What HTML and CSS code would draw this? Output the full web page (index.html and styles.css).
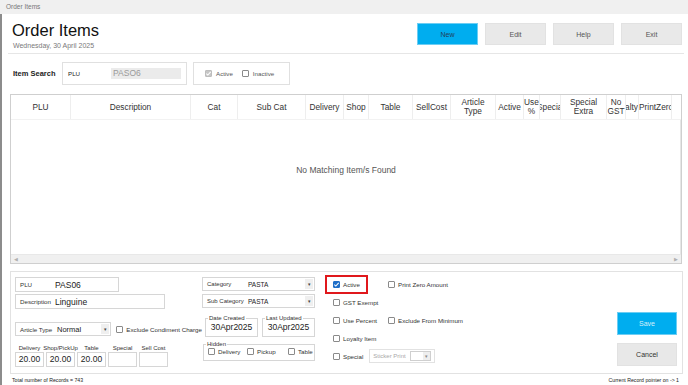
FILE: index.html
```html
<!DOCTYPE html>
<html>
<head>
<meta charset="utf-8">
<link rel="stylesheet" href="styles.css">
</head>
<body>
<div class="titlebar">Order Items</div>
<div class="window">
  <div class="top">
    <div class="title-block">
      <h1>Order Items</h1>
      <div class="date">Wednesday, 30 April 2025</div>
    </div>
    <div class="actions">
      <button class="btn primary">New</button>
      <button class="btn">Edit</button>
      <button class="btn">Help</button>
      <button class="btn">Exit</button>
    </div>
  </div>

  <div class="search">
    <span class="search-label">Item Search</span>
    <div class="box plu-box"><span class="s-lbl">PLU</span><span class="s-input">PASO6</span></div>
    <div class="box status-box">
      <span class="cb disabled checked"><svg viewBox="0 0 8 8"><path d="M1.5 4.2 L3.2 5.8 L6.5 2.2" fill="none" stroke="#fff" stroke-width="1.2"/></svg></span><span class="s-opt">Active</span>
      <span class="cb"></span><span class="s-opt">Inactive</span>
    </div>
  </div>

  <div class="grid">
    <div class="grid-head">
      <div class="gh c-plu">PLU</div>
      <div class="gh c-desc">Description</div>
      <div class="gh c-cat">Cat</div>
      <div class="gh c-sub">Sub Cat</div>
      <div class="gh c-del">Delivery</div>
      <div class="gh c-shop">Shop</div>
      <div class="gh c-table">Table</div>
      <div class="gh c-sell">SellCost</div>
      <div class="gh c-art">Article<br>Type</div>
      <div class="gh c-act">Active</div>
      <div class="gh c-use">Use<br>%</div>
      <div class="gh c-spec"><span class="clip">Special</span></div>
      <div class="gh c-spex">Special<br>Extra</div>
      <div class="gh c-gst">No<br>GST</div>
      <div class="gh c-loy"><span class="clip">Loyalty</span></div>
      <div class="gh c-pz"><span class="clip">PrintZero</span></div>
      <div class="gh c-fill"></div>
    </div>
    <div class="grid-body">
      <span class="empty">No Matching Item/s Found</span>
      <span class="vline"></span>
    </div>
    <div class="hscroll">
      <span class="arr">&#9664;</span>
      <span class="arr">&#9654;</span>
    </div>
  </div>

  <div class="panel">
    <div class="col1">
      <div class="field f-plu"><span class="f-lbl">PLU</span><span class="f-val">PAS06</span></div>
      <div class="field f-desc"><span class="f-lbl">Description</span><span class="f-val">Linguine</span></div>
      <div class="art-row">
        <div class="field f-art">
          <span class="f-lbl">Article Type</span><span class="f-val small">Normal</span>
          <span class="dd">&#9662;</span>
        </div>
        <span class="cb"></span><span class="opt">Exclude Condiment Charge</span>
      </div>
      <div class="prices">
        <div class="price"><span class="p-lbl">Delivery</span><div class="p-box">20.00</div></div>
        <div class="price"><span class="p-lbl">Shop/PickUp</span><div class="p-box">20.00</div></div>
        <div class="price"><span class="p-lbl">Table</span><div class="p-box">20.00</div></div>
        <div class="price"><span class="p-lbl">Special</span><div class="p-box"></div></div>
        <div class="price"><span class="p-lbl">Sell Cost</span><div class="p-box"></div></div>
      </div>
    </div>

    <div class="col2">
      <div class="sel"><span class="f-lbl c2">Category</span><span class="sel-val">PASTA</span><span class="dd">&#9662;</span></div>
      <div class="sel sub"><span class="f-lbl c2">Sub Category</span><span class="sel-val">PASTA</span><span class="dd">&#9662;</span></div>
      <div class="dates">
        <fieldset class="fs"><legend>Date Created</legend><div class="d-val">30Apr2025</div></fieldset>
        <fieldset class="fs"><legend>Last Updated</legend><div class="d-val">30Apr2025</div></fieldset>
      </div>
      <fieldset class="fs hidden-fs">
        <legend>Hidden</legend>
        <div class="hid-row">
          <span class="cb"></span><span class="opt">Delivery</span>
          <span class="cb"></span><span class="opt">Pickup</span>
          <span class="cb"></span><span class="opt">Table</span>
        </div>
      </fieldset>
    </div>

    <div class="col3">
      <div class="c3-cell"><span class="redbox"><span class="cb checked"><svg viewBox="0 0 8 8"><path d="M1.5 4.2 L3.2 5.8 L6.5 2.2" fill="none" stroke="#fff" stroke-width="1.2"/></svg></span><span class="opt">Active</span></span></div>
      <div class="c3-cell"><span class="cb"></span><span class="opt">Print Zero Amount</span></div>
      <div class="c3-cell"><span class="cb"></span><span class="opt">GST Exempt</span></div>
      <div class="c3-cell"></div>
      <div class="c3-cell"><span class="cb"></span><span class="opt">Use Percent</span></div>
      <div class="c3-cell"><span class="cb"></span><span class="opt">Exclude From Minimum</span></div>
      <div class="c3-cell"><span class="cb"></span><span class="opt">Loyalty Item</span></div>
      <div class="c3-cell"></div>
      <div class="c3-cell span2">
        <span class="cb"></span><span class="opt">Special</span>
        <div class="sticker"><span class="st-lbl">Sticker Print</span><span class="st-dd"><span class="st-in"></span><span class="st-arr">&#9662;</span></span></div>
      </div>
    </div>

    <div class="col4">
      <button class="btn2 save">Save</button>
      <button class="btn2 cancel">Cancel</button>
    </div>
  </div>

  <div class="footer">
    <span>Total number of Records = 743</span>
    <span>Current Record pointer on -&gt; 1</span>
  </div>
</div>
</body>
</html>
```

FILE: styles.css
```css
* { box-sizing: border-box; }

body {
  margin: 0;
  width: 688px;
  height: 385px;
  overflow: hidden;
  font-family: "Liberation Sans", Arial, sans-serif;
  color: #333;
  background: #fff;
}

.titlebar {
  height: 14px;
  background: #f0f0f0;
  font-size: 6.5px;
  color: #777;
  line-height: 14px;
  padding-left: 6px;
}

.window {
  height: 371px;
  border-left: 2px solid #8c8c8c;
  display: flex;
  flex-direction: column;
}

/* header */
.top {
  height: 40px;
  flex: none;
  display: flex;
  justify-content: space-between;
  margin: 0 4px 0 6px;
  border-bottom: 1px solid #e6e6e6;
}
.title-block { padding: 6px 0 0 4px; }
h1 {
  margin: 0;
  font-size: 16.5px;
  font-weight: normal;
  line-height: 20px;
  color: #111;
}
.date {
  font-size: 7px;
  color: #7a7a7a;
  line-height: 9px;
  margin-top: 1px;
  padding-left: 1px;
}
.actions {
  display: flex;
  gap: 7px;
  padding: 9px 2px 0 0;
}
.btn {
  width: 61px;
  height: 22px;
  border: 1px solid #e2e2e2;
  background: #e9e9e9;
  font-family: inherit;
  font-size: 7px;
  color: #555;
  padding: 0;
}
.btn.primary {
  background: #00adef;
  border-color: #6ccdf3;
  color: #23405a;
}

/* search */
.search {
  height: 40px;
  flex: none;
  display: flex;
  align-items: flex-start;
  padding: 8px 0 0 11px;
}
.search-label {
  font-weight: bold;
  font-size: 7.5px;
  width: 49px;
  line-height: 23px;
  color: #222;
}
.box {
  border: 1px solid #e0e0e0;
  height: 23px;
  display: flex;
  align-items: center;
}
.plu-box { width: 125px; padding-left: 5px; }
.s-lbl { font-size: 6.2px; width: 43px; color: #222; }
.s-input {
  width: 70px;
  height: 11px;
  background: #ebebeb;
  color: #9a9a9a;
  font-size: 8.5px;
  line-height: 11px;
  padding-left: 2px;
}
.status-box { margin-left: 6px; width: 97px; padding-left: 11px; }
.s-opt { font-size: 6.2px; color: #555; margin: 0 9px 0 4px; }

/* checkboxes */
.cb {
  flex: none;
  display: inline-block;
  width: 7px;
  height: 7px;
  border: 1px solid #8a8a8a;
  border-radius: 1px;
  background: #fff;
  position: relative;
}
.cb svg { position: absolute; left: -1px; top: -1px; width: 7px; height: 7px; }
.cb.checked { background: #1f6fc8; border-color: #1f6fc8; }
.cb.disabled { background: #c6c6c6; border-color: #bdbdbd; }
.opt { font-size: 6.2px; color: #333; margin-left: 3px; white-space: nowrap; }

/* grid */
.grid {
  flex: none;
  margin-left: 8px;
  width: 672px;
  height: 170px;
  border: 1px solid #cfcfcf;
  display: flex;
  flex-direction: column;
}
.grid-head {
  height: 25px;
  flex: none;
  display: flex;
  border-bottom: 1px solid #f2f2f2;
}
.gh {
  flex: none;
  display: flex;
  align-items: center;
  justify-content: center;
  text-align: center;
  font-size: 8.3px;
  line-height: 9px;
  color: #333;
  white-space: nowrap;
  overflow: hidden;
  border-right: 1px solid #eeeeee;
}
.clip { display: block; overflow: hidden; white-space: nowrap; }
.c-plu { width: 60px; }
.c-desc { width: 120px; }
.c-cat { width: 47px; }
.c-sub { width: 68px; }
.c-del { width: 38px; }
.c-shop { width: 25px; }
.c-table { width: 44px; }
.c-sell { width: 38px; }
.c-art { width: 45px; }
.c-act { width: 28px; }
.c-use { width: 16px; }
.c-spec { width: 21px; }
.c-spec .clip { width: 20px; text-indent: -3px; }
.c-spex { width: 46px; }
.c-gst { width: 19px; }
.c-loy { width: 13px; }
.c-loy .clip { width: 12px; direction: rtl; }
.c-pz { width: 33px; justify-content: flex-start; }
.c-pz .clip { width: 32px; }
.c-fill { flex: 1; border-right: none; }

.grid-body {
  flex: 1;
  position: relative;
  display: flex;
  justify-content: center;
  padding-top: 45px;
}
.empty { font-size: 8.5px; color: #555; line-height: 10px; }
.vline {
  position: absolute;
  right: 0;
  top: 0;
  bottom: 0;
  width: 1px;
  background: #e6e6e6;
}
.hscroll {
  height: 9px;
  flex: none;
  background: #f0f0f0;
  border-top: 1px solid #e8e8e8;
  display: flex;
  justify-content: space-between;
  align-items: center;
  padding: 0 3px;
}
.arr { font-size: 5px; color: #b0b0b0; line-height: 8px; }

/* detail panel */
.panel {
  flex: none;
  margin: 7px 0 0 8px;
  width: 673px;
  height: 103px;
  border: 1px solid #e2e2e2;
  display: flex;
  padding: 5px 5px 0 4px;
}
.col1 { width: 187px; flex: none; }
.field {
  border: 1px solid #d6d6d6;
  height: 15px;
  display: flex;
  align-items: center;
  position: relative;
}
.f-plu { width: 104px; }
.f-desc { width: 150px; margin-top: 2px; }
.f-lbl {
  font-size: 6.2px;
  width: 39px;
  padding-left: 4px;
  color: #333;
  white-space: nowrap;
  flex: none;
}
.f-val { font-size: 8.5px; color: #222; }
.f-val.small { font-size: 7.5px; }
.art-row {
  margin-top: 13px;
  display: flex;
  align-items: center;
  height: 14px;
}
.f-art { width: 98px; height: 14px; margin-right: 5px; }
.f-art .f-lbl { width: 41px; }
.dd {
  position: absolute;
  right: 1px;
  top: 1px;
  bottom: 1px;
  width: 8px;
  background: #efefef;
  font-size: 5px;
  color: #444;
  display: flex;
  align-items: center;
  justify-content: center;
}
.prices { display: flex; gap: 2px; margin-top: 8px; }
.price { width: 29px; display: flex; flex-direction: column; align-items: center; }
.p-lbl { font-size: 6px; line-height: 8px; white-space: nowrap; color: #333; }
.p-box {
  width: 29px;
  height: 15px;
  border: 1px solid #d6d6d6;
  font-size: 8.5px;
  line-height: 13px;
  text-align: center;
  color: #222;
}

.col2 { width: 113px; flex: none; }
.sel {
  border: 1px solid #d6d6d6;
  height: 14px;
  display: flex;
  align-items: center;
  position: relative;
}
.sel.sub { margin-top: 3px; }
.f-lbl.c2 { width: 45px; padding-left: 4px; font-size: 6px; }
.sel-val { font-size: 6.5px; color: #222; }
.dates { display: flex; gap: 4px; margin: 7px 0 0 3px; }
.fs {
  margin: 0;
  padding: 0;
  border: 1px solid #d6d6d6;
  min-width: 0;
}
.fs legend {
  font-size: 6px;
  line-height: 6px;
  padding: 0 1px;
  margin-left: 2px;
  color: #333;
}
.dates .fs { width: 53px; height: 22px; }
.d-val { font-size: 8.5px; text-align: center; line-height: 13px; color: #222; }
.hidden-fs { width: 112px; height: 20px; margin: 4px 0 0 1px; }
.hid-row { display: flex; align-items: center; padding: 1px 0 0 4px; }
.hid-row .opt { margin-right: 0; }
.hid-row .opt:nth-of-type(2) { width: 29px; }
.hid-row .opt:nth-of-type(4) { width: 31px; }

.col3 {
  margin: -2px 0 0 10px;
  width: 125px;
  flex: none;
  display: grid;
  grid-template-columns: 63px 1fr;
  grid-auto-rows: 18px;
}
.c3-cell { display: flex; align-items: center; padding-left: 8px; }
.c3-cell:nth-child(even) { padding-left: 0; }
.c3-cell:first-child { padding-left: 0; }
.c3-cell.span2 { grid-column: 1 / span 2; }
.redbox {
  display: flex;
  align-items: center;
  width: 43px;
  height: 19px;
  border: 2px solid #e0181c;
  padding-left: 6px;
}
.sticker {
  margin-left: 6px;
  width: 66px;
  height: 14px;
  border: 1px solid #e2e2e2;
  display: flex;
  align-items: center;
  padding-left: 3px;
}
.st-lbl { font-size: 6px; color: #a8a8a8; width: 37px; }
.st-dd {
  display: flex;
  width: 21px;
  height: 10px;
  border: 1px solid #cfcfcf;
}
.st-in { flex: 1; background: #fff; }
.st-arr {
  width: 7px;
  background: #eee;
  font-size: 4.5px;
  color: #888;
  display: flex;
  align-items: center;
  justify-content: center;
}

.col4 {
  margin-left: auto;
  width: 60px;
  display: flex;
  flex-direction: column;
  padding-top: 35px;
}
.btn2 {
  width: 60px;
  height: 23px;
  padding: 0;
  font-family: inherit;
  font-size: 7px;
}
.save { background: #00adef; border: 1px solid #6ccdf3; color: #d6f0fb; }
.cancel { margin-top: 8px; background: #e8e8e8; border: 1px solid #e2e2e2; color: #333; }

.footer {
  flex: none;
  height: 11px;
  display: flex;
  justify-content: space-between;
  align-items: center;
  padding: 1px 9px 0 10px;
  font-size: 5.2px;
  color: #222;
}
```
